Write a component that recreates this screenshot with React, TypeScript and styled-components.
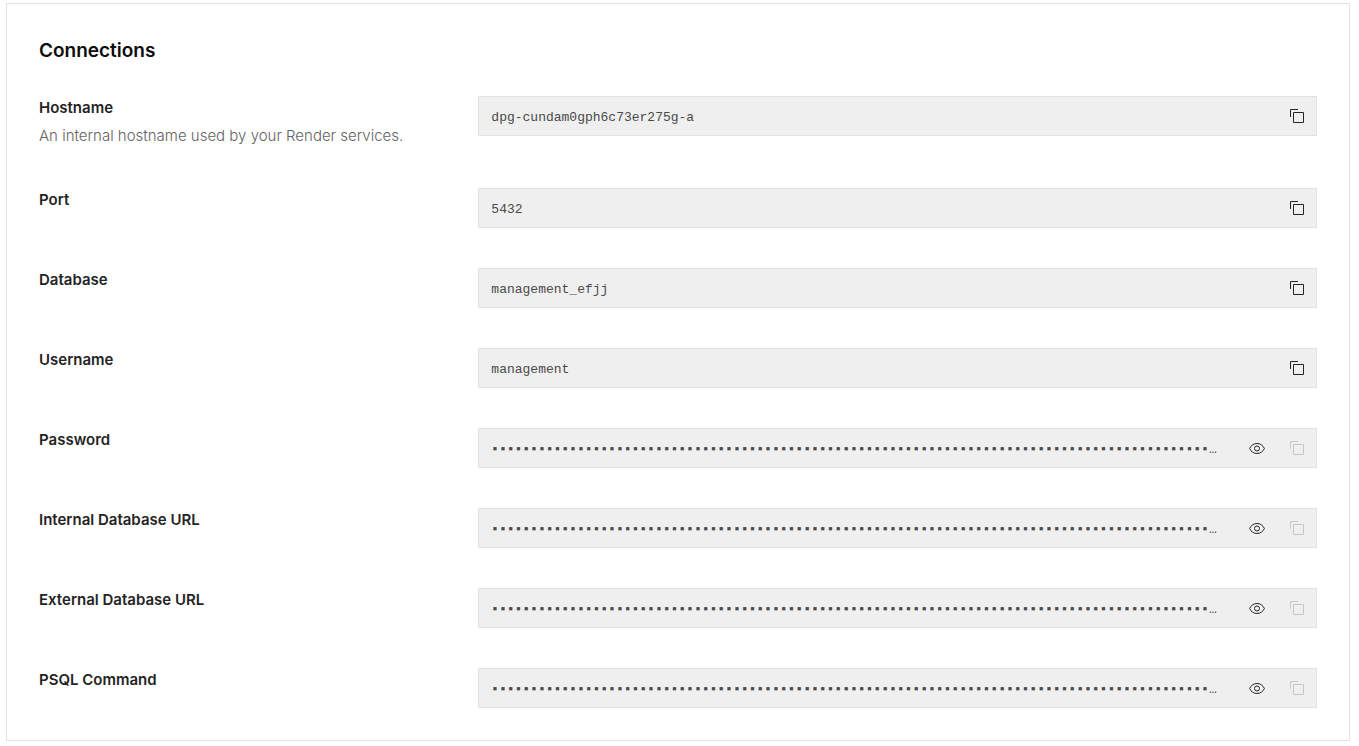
import React, { useId } from 'react';
import styled, { createGlobalStyle } from 'styled-components';

const GlobalStyle = createGlobalStyle`
  *, *::before, *::after { box-sizing: border-box; }
  body {
    margin: 0;
    background: #ffffff;
    font-family: Inter, "Liberation Sans", sans-serif;
  }
`;

const Page = styled.main`
  padding: 3px 9px 5px 6px;
`;

const Card = styled.section`
  display: flex;
  flex-direction: column;
  gap: 30px;
  padding: 32px;
  border: 1px solid #e3e3e3;
  background: #ffffff;
`;

const Title = styled.h2`
  margin: 0;
  font-size: 19px;
  font-weight: 600;
  line-height: 30px;
  color: #0d0d0d;
`;

const FieldList = styled.div`
  display: flex;
  flex-direction: column;
  gap: 40px;
`;

const FieldRow = styled.div`
  display: grid;
  grid-template-columns: minmax(0, 1fr) minmax(0, 2fr);
  column-gap: 20px;
  align-items: start;
`;

const FieldInfo = styled.div`
  display: flex;
  flex-direction: column;
  gap: 4px;
`;

const Label = styled.label`
  font-size: 15px;
  font-weight: 600;
  line-height: 24px;
  color: #242424;
`;

const Description = styled.p`
  margin: 0;
  font-size: 15px;
  font-weight: 300;
  line-height: 24px;
  color: #636363;
`;

const ValueBox = styled.div`
  display: flex;
  align-items: stretch;
  gap: 2px;
  height: 40px;
  border: 1px solid #e3e3e3;
  background: #efefef;
`;

const ValueInput = styled.input`
  flex: 1;
  min-width: 0;
  margin: 0 16px 0 12px;
  padding: 3px 0 0;
  border: 0;
  outline: 0;
  background: transparent;
  font-family: "Liberation Mono", monospace;
  font-size: 13px;
  line-height: 20px;
  color: #4a4a4a;
  text-overflow: ellipsis;
`;

const IconButton = styled.button`
  display: flex;
  flex: none;
  align-items: center;
  justify-content: center;
  width: 38px;
  padding: 0;
  border: 0;
  background: transparent;
  color: #242424;
  cursor: pointer;

  &:disabled {
    color: #c6c6c6;
    cursor: default;
  }
`;

const CopyIcon = () => (
  <svg width="16" height="16" viewBox="0 0 16 16" fill="none" stroke="currentColor" aria-hidden="true">
    <path d="M1.5 9V1.5H9" />
    <path d="M4.5 4.5h10v10h-10z" />
  </svg>
);

const EyeIcon = () => (
  <svg width="16" height="16" viewBox="0 0 16 16" fill="none" stroke="currentColor" aria-hidden="true">
    <path d="M.6 8.5C2 5.300 4.800 3.500 8 3.500s6 1.800 7.400 5c-1.400 3.200-4.200 5-7.400 5S2 11.700.6 8.500z" />
    <circle cx="8" cy="8.5" r="2.500" />
  </svg>
);

const MASK = '▪'.repeat(160);

type Field = { label: string; description?: string; value?: string };

const fields: Field[] = [
  {
    label: 'Hostname',
    description: 'An internal hostname used by your Render services.',
    value: 'dpg-cundam0gph6c73er275g-a',
  },
  { label: 'Port', value: '5432' },
  { label: 'Database', value: 'management_efjj' },
  { label: 'Username', value: 'management' },
  { label: 'Password' },
  { label: 'Internal Database URL' },
  { label: 'External Database URL' },
  { label: 'PSQL Command' },
];

function ConnectionField({ label, description, value }: Field) {
  const id = useId();
  const hidden = value === undefined;
  return (
    <FieldRow>
      <FieldInfo>
        <Label htmlFor={id}>{label}</Label>
        {description && <Description>{description}</Description>}
      </FieldInfo>
      <ValueBox>
        <ValueInput id={id} type="text" readOnly value={hidden ? MASK : value} />
        {hidden && (
          <IconButton type="button" aria-label={`Show ${label}`}>
            <EyeIcon />
          </IconButton>
        )}
        <IconButton type="button" aria-label={`Copy ${label}`} disabled={hidden}>
          <CopyIcon />
        </IconButton>
      </ValueBox>
    </FieldRow>
  );
}

export default function App() {
  return (
    <Page>
      <GlobalStyle />
      <Card>
        <Title>Connections</Title>
        <FieldList>
          {fields.map((field) => (
            <ConnectionField key={field.label} {...field} />
          ))}
        </FieldList>
      </Card>
    </Page>
  );
}
